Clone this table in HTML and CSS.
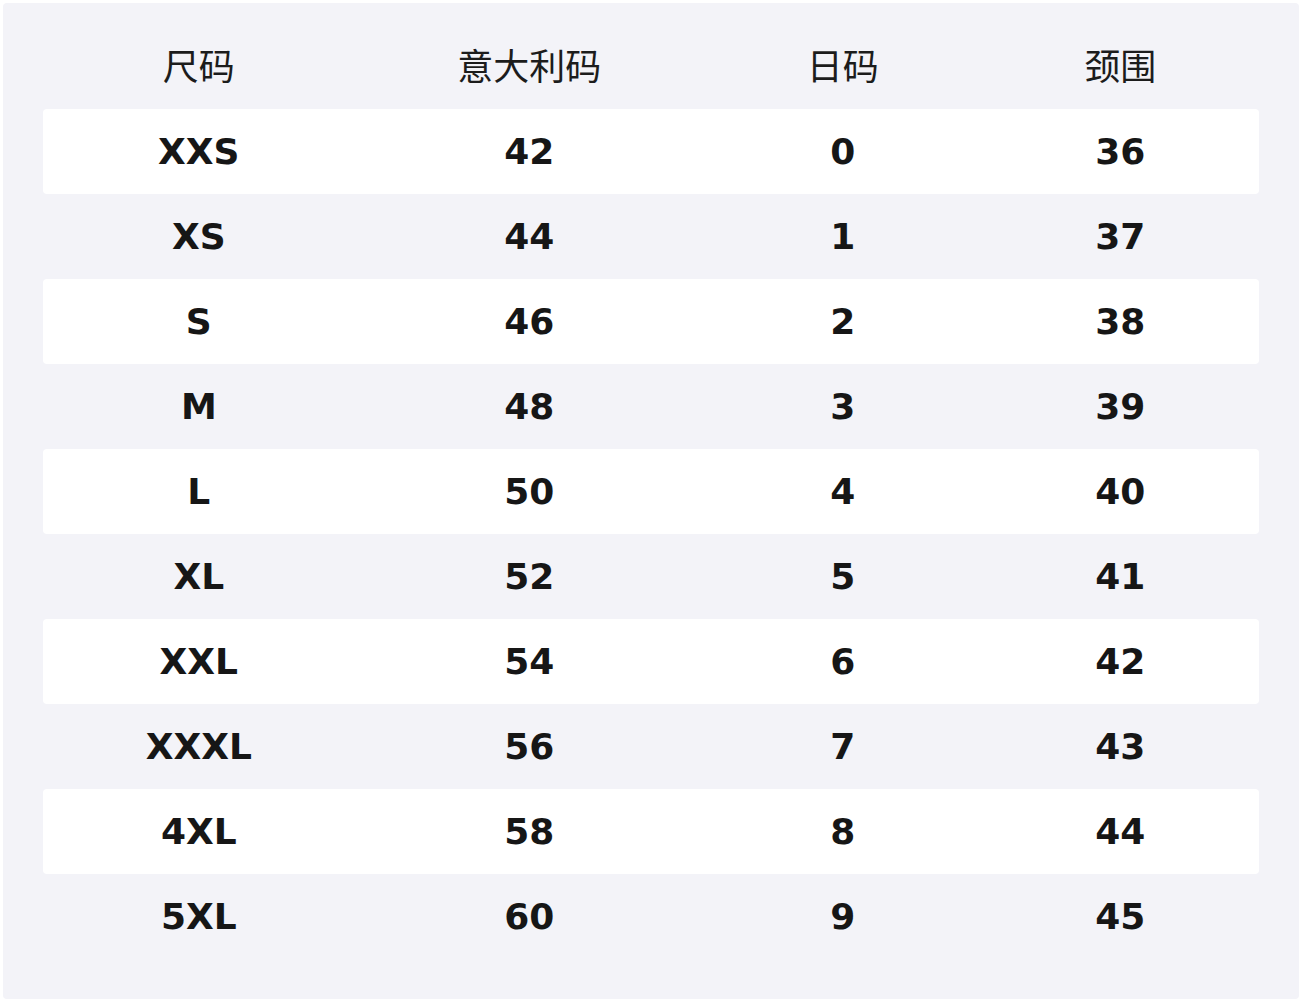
FILE: index.html
```html
<!DOCTYPE html>
<html lang="zh">
<head>
<meta charset="utf-8">
<title>尺码表</title>
<link rel="stylesheet" href="styles.css">
</head>
<body>
<div class="panel">
  <div class="table">
    <div class="row head"><div class="cell">尺码</div><div class="cell">意大利码</div><div class="cell">日码</div><div class="cell">颈围</div></div>
    <div class="row odd"><div class="cell">XXS</div><div class="cell">42</div><div class="cell">0</div><div class="cell">36</div></div>
    <div class="row"><div class="cell">XS</div><div class="cell">44</div><div class="cell">1</div><div class="cell">37</div></div>
    <div class="row odd"><div class="cell">S</div><div class="cell">46</div><div class="cell">2</div><div class="cell">38</div></div>
    <div class="row"><div class="cell">M</div><div class="cell">48</div><div class="cell">3</div><div class="cell">39</div></div>
    <div class="row odd"><div class="cell">L</div><div class="cell">50</div><div class="cell">4</div><div class="cell">40</div></div>
    <div class="row"><div class="cell">XL</div><div class="cell">52</div><div class="cell">5</div><div class="cell">41</div></div>
    <div class="row odd"><div class="cell">XXL</div><div class="cell">54</div><div class="cell">6</div><div class="cell">42</div></div>
    <div class="row"><div class="cell">XXXL</div><div class="cell">56</div><div class="cell">7</div><div class="cell">43</div></div>
    <div class="row odd"><div class="cell">4XL</div><div class="cell">58</div><div class="cell">8</div><div class="cell">44</div></div>
    <div class="row"><div class="cell">5XL</div><div class="cell">60</div><div class="cell">9</div><div class="cell">45</div></div>
  </div>
</div>
</body>
</html>
```
FILE: styles.css
```css
html, body {
  margin: 0;
  padding: 0;
  background: #ffffff;
}
body {
  padding: 3px;
  font-family: "DejaVu Sans", "Noto Sans CJK SC", sans-serif;
  color: #161616;
}
.panel {
  box-sizing: border-box;
  width: 1296px;
  height: 996px;
  padding: 40px;
  background: #f3f3f8;
  border-radius: 4px;
}
.table {
  display: grid;
  grid-template-columns: repeat(4, auto);
}
.row {
  grid-column: 1 / -1;
  display: grid;
  grid-template-columns: subgrid;
  height: 85px;
  align-items: center;
  border-radius: 4px;
}
.row.odd {
  background: #ffffff;
}
.cell {
  text-align: center;
  font-size: 36px;
  font-weight: 700;
  line-height: 48px;
  white-space: nowrap;
}
.row.head {
  height: 66px;
  align-items: start;
}
.row.head .cell {
  font-family: "Noto Sans CJK SC", sans-serif;
  font-weight: 400;
  font-size: 36px;
  line-height: 42px;
  color: #1c1c1c;
}
```
